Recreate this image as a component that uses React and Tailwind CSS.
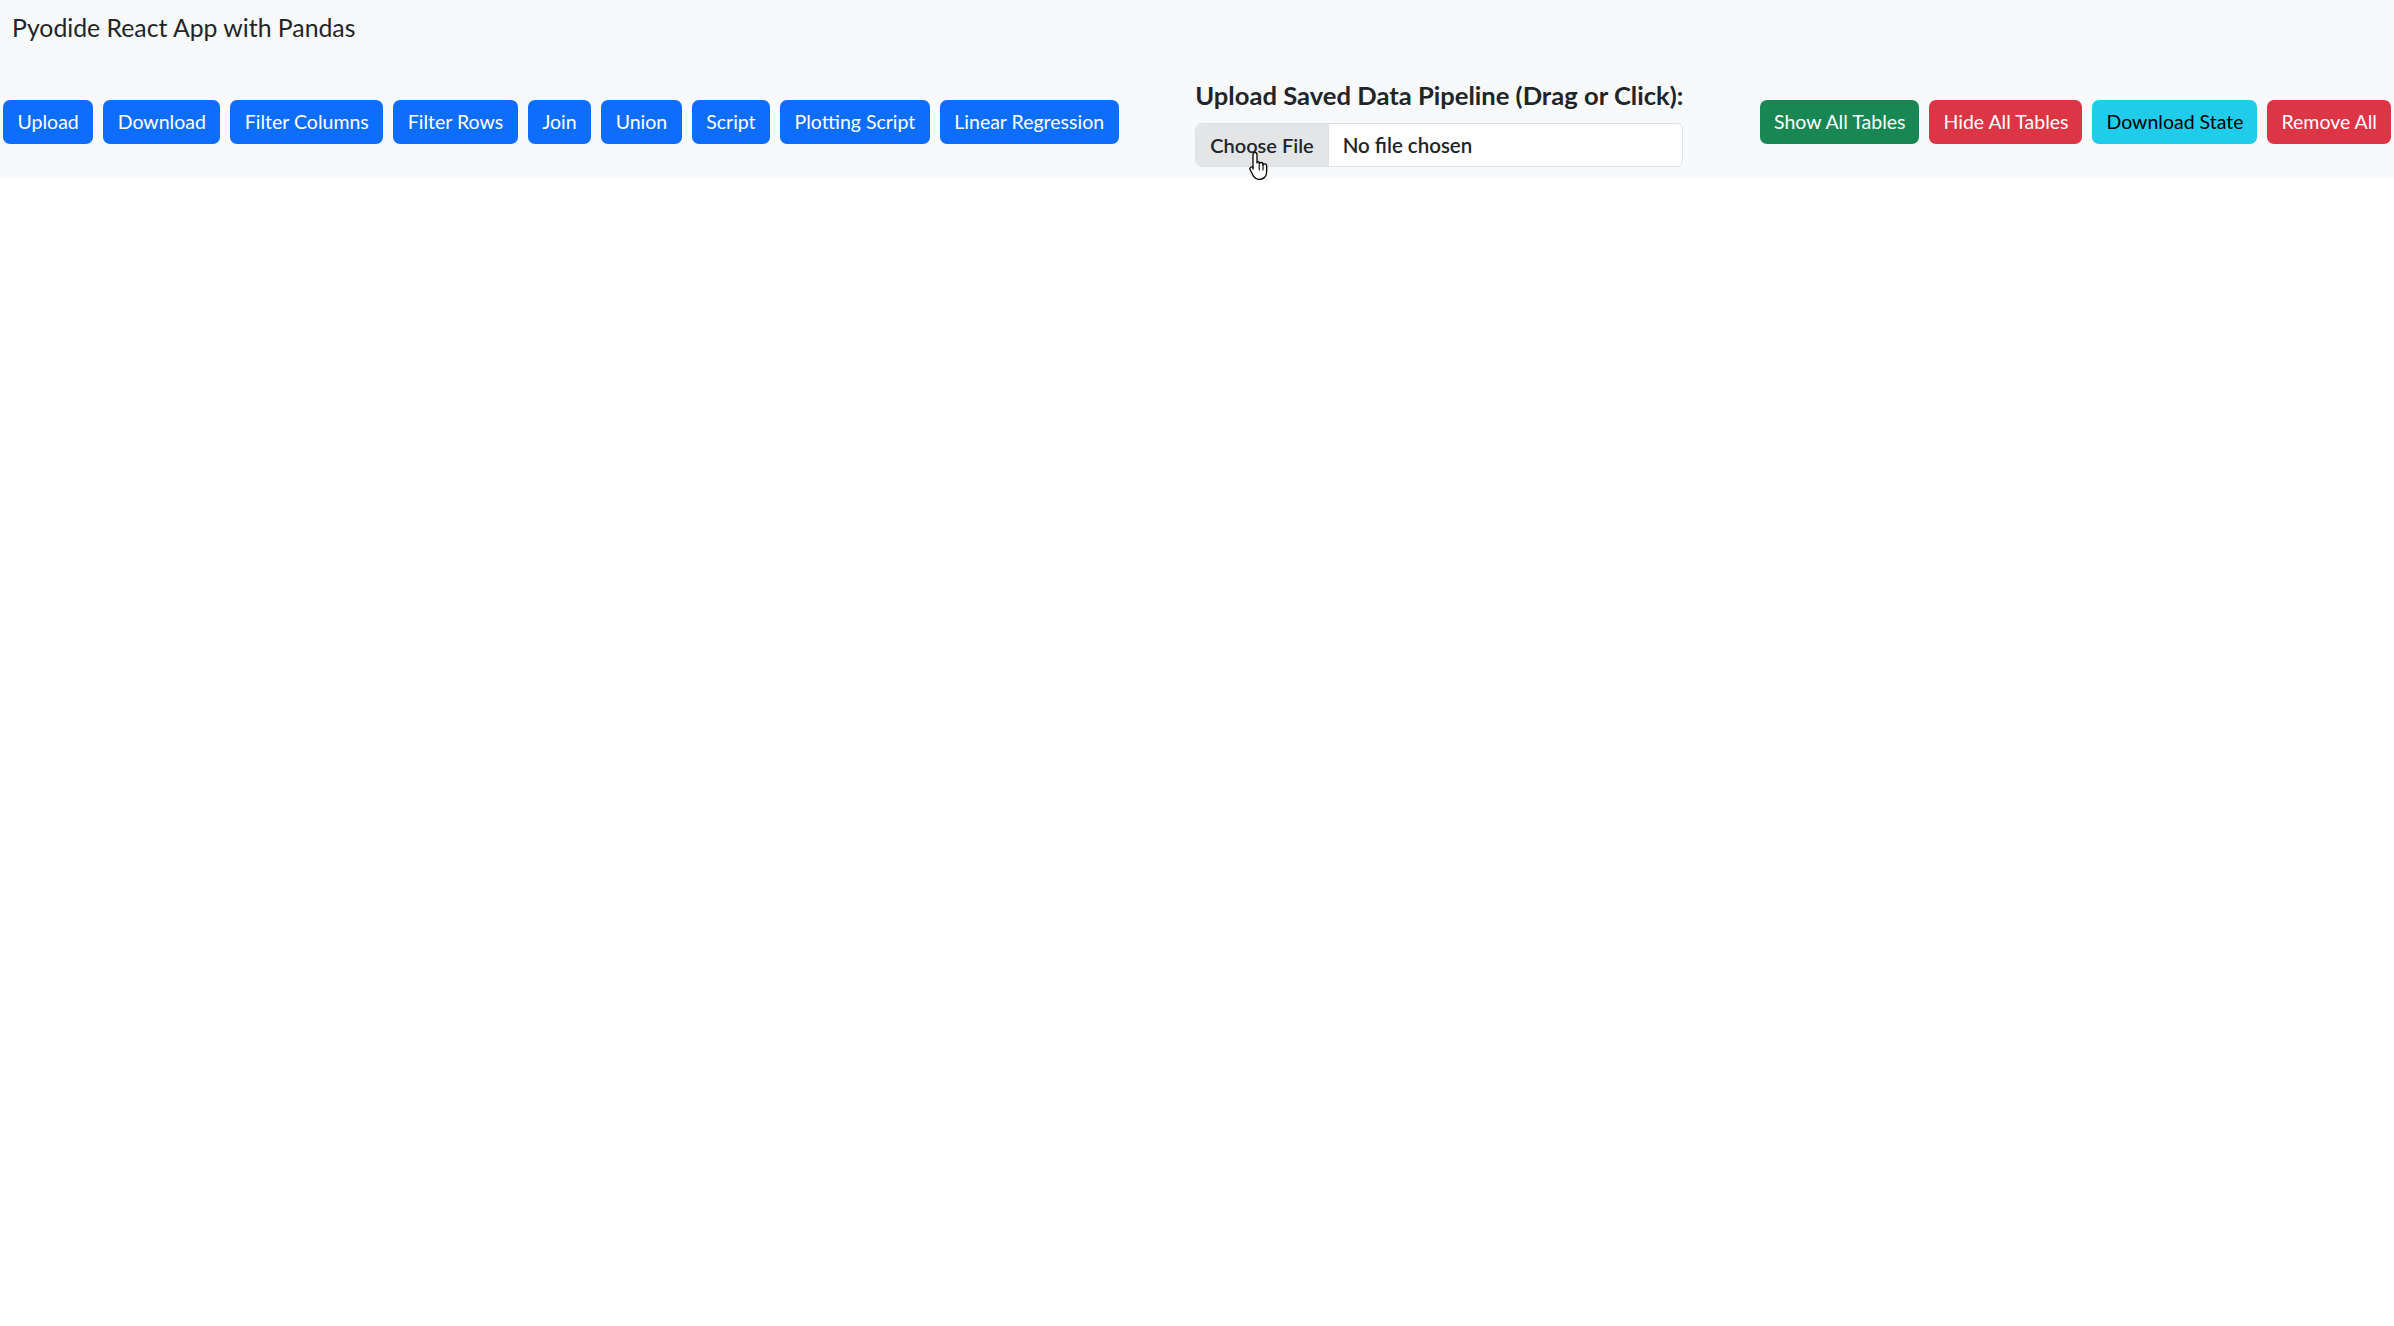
import React from 'react';

const leftActions = [
  'Upload',
  'Download',
  'Filter Columns',
  'Filter Rows',
  'Join',
  'Union',
  'Script',
  'Plotting Script',
  'Linear Regression',
];

const rightActions = [
  { label: 'Show All Tables', cls: 'bg-[#198754] text-white' },
  { label: 'Hide All Tables', cls: 'bg-[#dc3545] text-white' },
  { label: 'Download State', cls: 'bg-[#1fcdeb] text-black' },
  { label: 'Remove All', cls: 'bg-[#dc3545] text-white' },
];

const HandCursor = () => (
  <svg width="22" height="30" viewBox="0 0 22 30" className="absolute left-[53px] top-[26px]">
    <path
      d="M6 2.5c1.1 0 2 .9 2 2V13l.2-1.6c1.1 0 2 .8 2 1.8v.8c.2-.9 1-1.5 1.9-1.5s1.9.8 1.9 1.8v.9c.2-.8 1-1.3 1.8-1.3 1 0 1.8.8 1.8 1.8v6.8c0 3.7-2.9 6.8-6.6 6.8H9.6c-2 0-3.8-1-4.9-2.6L1.3 20c-.6-.9-.4-2.1.5-2.7.8-.5 1.9-.3 2.5.4L4 19V4.5c0-1.1.9-2 2-2z"
      fill="#ffffff"
      stroke="#000000"
      strokeWidth="1.3"
      strokeLinejoin="round"
    />
    <path d="M10.2 15v5M14 15v5M17.6 16v4" stroke="#000000" strokeWidth="1.1" strokeLinecap="round" />
  </svg>
);

const App = () => {
  return (
    <div className="min-h-[1326px] w-full bg-white text-[#212529] font-['Lato','Noto_Sans',sans-serif]">
      <div className="bg-[#f8f9fa] h-[177px] px-[3px]">
        <div className="pl-[9px] pt-[10px] text-[24.8px] leading-[36px]">Pyodide React App with Pandas</div>

        <div className="mt-[31px] flex items-center justify-between">
          <div className="flex gap-[10px]">
            {leftActions.map(label => (
              <button
                key={label}
                className="h-[44px] px-[14.5px] rounded-[7px] bg-[#0d6efd] text-white text-[19.5px] leading-none"
              >
                {label}
              </button>
            ))}
          </div>

          <div className="flex flex-col">
            <label className="text-[25.6px] leading-[36px] font-bold whitespace-nowrap">
              Upload Saved Data Pipeline (Drag or Click):
            </label>
            <div className="relative mt-[10px] h-[44px] w-[488px] flex items-stretch rounded-[6px] border border-[#dee2e6] bg-white">
              <div className="flex items-center px-[14px] bg-[#e4e5e7] border-r border-[#dee2e6] rounded-l-[6px] text-[20px] font-semibold">
                Choose File
              </div>
              <div className="flex items-center px-[14px] text-[20.5px] font-semibold">No file chosen</div>
              <HandCursor />
            </div>
          </div>

          <div className="flex gap-[10px]">
            {rightActions.map(a => (
              <button
                key={a.label}
                className={`h-[44px] px-[14px] rounded-[7px] text-[19.5px] leading-none ${a.cls}`}
              >
                {a.label}
              </button>
            ))}
          </div>
        </div>
      </div>
    </div>
  );
};

export default App;
